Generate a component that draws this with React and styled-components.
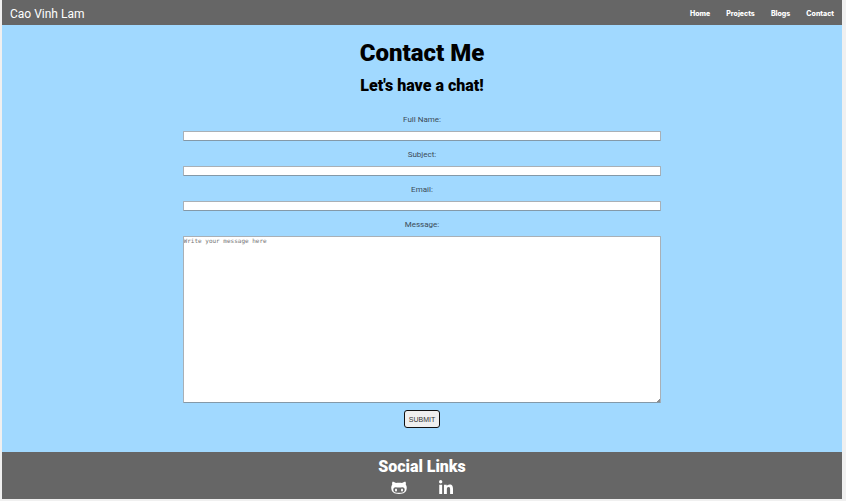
import React from "react";
import styled, { createGlobalStyle } from "styled-components";
import { FaLinkedinIn } from "react-icons/fa";

const GlobalStyle = createGlobalStyle`
  * { box-sizing: border-box; }
  body {
    margin: 0;
    background: #f0f0f0;
    font-family: Roboto, "Liberation Sans", sans-serif;
    color: #000;
  }
`;

const Page = styled.div`
  margin: 0 4px 2px 2px;
  background: #a1d9ff;
`;

const Header = styled.header`
  display: flex;
  align-items: center;
  justify-content: space-between;
  height: 25px;
  padding: 2px 8px 0;
  background: #666;
  color: #fff;
`;

const Brand = styled.a`
  color: inherit;
  font-size: 12px;
  line-height: 16px;
  text-decoration: none;
`;

const Nav = styled.nav`
  display: flex;
  gap: 16px;
`;

const NavLink = styled.a`
  color: inherit;
  font-family: Inter, sans-serif;
  font-size: 7px;
  font-weight: 800;
  line-height: 16px;
  text-decoration: none;
`;

const Main = styled.main`
  display: flex;
  flex-direction: column;
  align-items: center;
  padding: 12px 0 24px;
`;

const Title = styled.h1`
  margin: 0;
  font-size: 24px;
  font-weight: 900;
  line-height: 32px;
`;

const Subtitle = styled.h2`
  margin: 5px 0 16px;
  font-size: 16px;
  font-weight: 900;
  line-height: 24px;
`;

const Form = styled.form`
  display: flex;
  flex-direction: column;
  align-items: center;
  width: 57%;
`;

const Label = styled.label`
  margin-bottom: 5px;
  color: #3b4a57;
  font-size: 8px;
  line-height: 12px;
`;

const Input = styled.input`
  width: 100%;
  height: 10px;
  margin-bottom: 8px;
  padding: 0 1px;
  border: 1px solid;
  border-color: #a9b0b6 #a9b0b6 #8499a8;
  border-radius: 1px;
  background: #fff;
  font-size: 7px;
`;

const Message = styled.textarea`
  display: block;
  width: 100%;
  height: 167px;
  margin-bottom: 7px;
  padding: 0;
  border: 1px solid;
  border-color: #a9b0b6 #a9b0b6 #8499a8;
  border-radius: 1px;
  background: #fff;
  font-family: "DejaVu Sans Mono", monospace;
  font-size: 6px;
  line-height: 8px;
  resize: vertical;

  &::placeholder { color: #757575; }
  &::-webkit-resizer {
    background: linear-gradient(135deg, transparent 90%, #8d8d8d 90%);
  }
`;

const Submit = styled.button`
  height: 18px;
  padding: 0 4px;
  border: 1px solid #111;
  border-radius: 3px;
  background: #efefef;
  color: #333;
  font-family: "Liberation Sans", sans-serif;
  font-size: 7px;
`;

const Footer = styled.footer`
  display: flex;
  flex-direction: column;
  align-items: center;
  padding: 4px 0 2px;
  background: #666;
  color: #fff;
`;

const FooterTitle = styled.h2`
  margin: 0;
  font-size: 16px;
  font-weight: 900;
  line-height: 22px;
`;

const Socials = styled.div`
  display: flex;
  gap: 31px;
  padding-top: 1px;
`;

const SocialLink = styled.a`
  display: flex;
  align-items: center;
  height: 18px;
  color: inherit;
`;

const links = ["Home", "Projects", "Blogs", "Contact"];
const fields = [
  { id: "name", label: "Full Name:", type: "text" },
  { id: "subject", label: "Subject:", type: "text" },
  { id: "email", label: "Email:", type: "email" },
];

function CatIcon() {
  return (
    <svg width="16" height="16" viewBox="0 0 16 16" aria-hidden="true">
      <path
        fill="currentColor"
        fillRule="evenodd"
        d="M1.4 1.8C2.6 1.7 4 2.4 4.9 3.1C6.6 2.7 9.4 2.7 11.1 3.1C12 2.4 13.4 1.7 14.6 1.8C15 2.8 15 3.8 14.8 4.7C15.6 5.7 15.9 7 15.7 8.5C15.3 12.2 13 13.9 8 13.9C3 13.9 .7 12.2 .3 8.5C.1 7 .4 5.7 1.2 4.7C1 3.8 1 2.8 1.4 1.8ZM4.7 7.3C3.1 7.3 2.3 8.2 2.3 9.7C2.3 12 4.2 12.8 8 12.8C11.8 12.8 13.7 12 13.7 9.7C13.7 8.2 12.9 7.3 11.3 7.3C10.2 7.3 9.2 7.6 8 7.6C6.8 7.6 5.8 7.3 4.7 7.3Z"
      />
      <ellipse cx="5" cy="9.9" rx="1" ry="1.5" fill="currentColor" />
      <ellipse cx="11" cy="9.9" rx="1" ry="1.5" fill="currentColor" />
    </svg>
  );
}

export default function App() {
  return (
    <>
      <GlobalStyle />
      <Page>
        <Header>
          <Brand href="#home">Cao Vinh Lam</Brand>
          <Nav>
            {links.map((link) => (
              <NavLink key={link} href={`#${link.toLowerCase()}`}>{link}</NavLink>
            ))}
          </Nav>
        </Header>
        <Main>
          <Title>Contact Me</Title>
          <Subtitle>Let's have a chat!</Subtitle>
          <Form>
            {fields.map(({ id, label, type }) => (
              <React.Fragment key={id}>
                <Label htmlFor={id}>{label}</Label>
                <Input id={id} name={id} type={type} />
              </React.Fragment>
            ))}
            <Label htmlFor="message">Message:</Label>
            <Message id="message" name="message" placeholder="Write your message here" />
            <Submit type="submit">SUBMIT</Submit>
          </Form>
        </Main>
        <Footer>
          <FooterTitle>Social Links</FooterTitle>
          <Socials>
            <SocialLink href="#github" aria-label="GitHub"><CatIcon /></SocialLink>
            <SocialLink href="#linkedin" aria-label="LinkedIn"><FaLinkedinIn size={16} /></SocialLink>
          </Socials>
        </Footer>
      </Page>
    </>
  );
}
